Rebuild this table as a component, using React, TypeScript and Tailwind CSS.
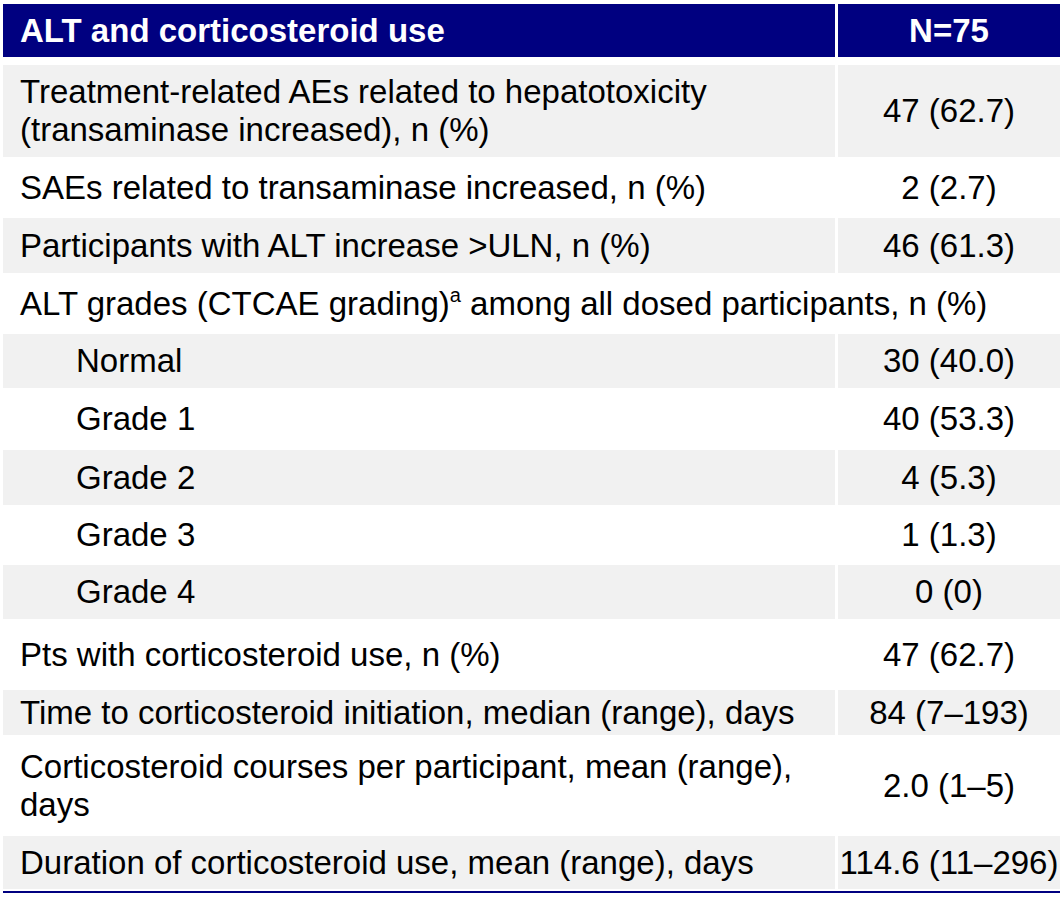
import React from "react";

type Row = {
  label: React.ReactNode;
  value?: string;
  h: string;
  gray: boolean;
  indent?: boolean;
  span?: boolean;
};

const rows: Row[] = [
  {
    label: (
      <>
        Treatment-related AEs related to hepatotoxicity
        <br />
        (transaminase increased), n (%)
      </>
    ),
    value: "47 (62.7)",
    h: "h-[92px]",
    gray: true,
  },
  { label: "SAEs related to transaminase increased, n (%)", value: "2 (2.7)", h: "h-[55px]", gray: false },
  { label: "Participants with ALT increase >ULN, n (%)", value: "46 (61.3)", h: "h-[55px]", gray: true },
  {
    label: (
      <>
        ALT grades (CTCAE grading)
        <sup className="text-[20px] relative top-[-13px] align-baseline">a</sup> among all dosed participants, n (%)
      </>
    ),
    h: "h-[55px]",
    gray: false,
    span: true,
  },
  { label: "Normal", value: "30 (40.0)", h: "h-[54px]", gray: true, indent: true },
  { label: "Grade 1", value: "40 (53.3)", h: "h-[56px]", gray: false, indent: true },
  { label: "Grade 2", value: "4 (5.3)", h: "h-[55px]", gray: true, indent: true },
  { label: "Grade 3", value: "1 (1.3)", h: "h-[54px]", gray: false, indent: true },
  { label: "Grade 4", value: "0 (0)", h: "h-[54px]", gray: true, indent: true },
  { label: "Pts with corticosteroid use, n (%)", value: "47 (62.7)", h: "h-[65px]", gray: false },
  {
    label: "Time to corticosteroid initiation, median (range), days",
    value: "84 (7–193)",
    h: "h-[45px]",
    gray: true,
  },
  {
    label: (
      <>
        Corticosteroid courses per participant, mean (range),
        <br />
        days
      </>
    ),
    value: "2.0 (1–5)",
    h: "h-[95px]",
    gray: false,
  },
  {
    label: "Duration of corticosteroid use, mean (range), days",
    value: "114.6 (11–296)",
    h: "h-[53px]",
    gray: true,
  },
];

export default function App() {
  return (
    <div
      className="w-[1063px] h-[899px] bg-white px-[3px] pt-[4px] text-black text-[33px] leading-[38px]"
      style={{ fontFamily: '"Liberation Sans", Arial, sans-serif' }}
    >
      <div className="flex gap-[3px] h-[53px] text-white font-bold">
        <div className="w-[832px] bg-[#000080] flex items-center pl-[17px]">ALT and corticosteroid use</div>
        <div className="w-[222px] bg-[#000080] flex items-center justify-center">N=75</div>
      </div>
      <div className="mt-[8px] flex flex-col gap-[3px]">
        {rows.map((r, i) => {
          const bg = r.gray ? "bg-[#f1f1f1]" : "bg-white";
          if (r.span) {
            return (
              <div key={i} className={`flex items-center ${r.h} ${bg} pl-[17px] whitespace-nowrap`}>
                <span>{r.label}</span>
              </div>
            );
          }
          return (
            <div key={i} className={`flex gap-[3px] ${r.h}`}>
              <div
                className={`w-[832px] flex items-center ${bg} ${r.indent ? "pl-[73px]" : "pl-[17px]"} whitespace-nowrap`}
              >
                <span>{r.label}</span>
              </div>
              <div className={`w-[222px] flex items-center justify-center ${bg} whitespace-nowrap`}>
                {r.value}
              </div>
            </div>
          );
        })}
      </div>
      <div className="mt-[2px] h-[2px] bg-[#000080]" />
    </div>
  );
}
